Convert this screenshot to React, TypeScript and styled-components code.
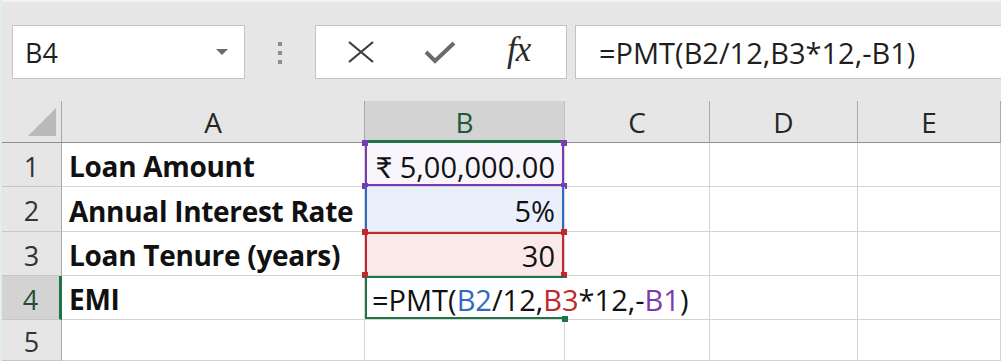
import { FC } from 'react';
import styled, { createGlobalStyle } from 'styled-components';

const GlobalStyle = createGlobalStyle`
    html, body {
        margin: 0;
        padding: 0;
        background: #ffffff;
        overflow: hidden;
    }
    body {
        font-family: "Open Sans", Lato, Arial, sans-serif;
    }
`;

const Frame = styled.div`
    width: 1001px;
    height: 361px;
    display: flex;
    flex-direction: column;
    overflow: hidden;
    border-left: 2px solid #e1efe6;
    box-sizing: border-box;
`;

const Toolbar = styled.div`
    height: 103px;
    background: #e6e6e6;
    border-top: 2px solid #f2f2f2;
    box-sizing: border-box;
    display: flex;
    align-items: flex-start;
    padding: 23px 0 0 10px;
`;

const Box = styled.div<{ $width?: number }>`
    height: 54px;
    box-sizing: border-box;
    background: #ffffff;
    border: 1px solid #c3c3c3;
    display: flex;
    align-items: center;
    width: ${p => (p.$width ? `${p.$width}px` : 'auto')};
    flex: ${p => (p.$width ? 'none' : '1')};
`;

const NameBox = styled(Box)`
    padding: 0 16px 0 12px;
    justify-content: space-between;
    font-size: 27px;
    color: #1f1f1f;
`;

const Caret = styled.span`
    width: 0;
    height: 0;
    border-left: 6px solid transparent;
    border-right: 6px solid transparent;
    border-top: 6px solid #6b6b6b;
`;

const Grip = styled.div`
    width: 70px;
    display: flex;
    flex-direction: column;
    align-items: center;
    gap: 5px;
    padding-top: 17px;
    & span {
        width: 4px;
        height: 4px;
        background: #8c8c8c;
    }
`;

const ButtonBox = styled(Box)`
    justify-content: space-around;
    padding: 0 8px 0 6px;
    margin-right: 8px;
`;

const IconSlot = styled.span`
    width: 48px;
    display: flex;
    justify-content: center;
    align-items: center;
`;

const Fx = styled.span`
    font-family: "Liberation Serif", "DejaVu Serif", serif;
    font-style: italic;
    font-size: 35px;
    color: #2b2b2b;
    letter-spacing: -1px;
    margin-top: -4px;
`;

const FormulaBox = styled(Box)`
    border-right: none;
    padding-left: 23px;
    font-size: 29px;
    color: #1f1f1f;
    white-space: nowrap;
`;

const Sheet = styled.div`
    flex: 1;
    display: grid;
    grid-template-columns: 60px 303px 200px 145px 148px 1fr;
    grid-template-rows: 42px 44px 45px 44px 44px 1fr;
    background: #ffffff;
`;

const Corner = styled.div`
    background: #e6e6e6;
    border-right: 1px solid #a8a8a8;
    border-bottom: 1px solid #8f8f8f;
    display: flex;
    align-items: flex-end;
    justify-content: flex-end;
    padding: 0 5px 6px 0;
    box-sizing: border-box;
`;

const ColHead = styled.div<{ $active?: boolean }>`
    background: ${p => (p.$active ? '#d3d3d3' : '#e6e6e6')};
    border-right: 1px solid ${p => (p.$active ? '#c4c4c4' : '#a9a9a9')};
    border-bottom: ${p => (p.$active ? '3px solid #217346' : '1px solid #8f8f8f')};
    box-sizing: border-box;
    display: flex;
    align-items: center;
    justify-content: center;
    padding-top: ${p => (p.$active ? '2px' : '0')};
    font-size: 28px;
    color: ${p => (p.$active ? '#1d5a37' : '#262626')};
`;

const RowHead = styled.div<{ $active?: boolean }>`
    background: ${p => (p.$active ? '#d3d3d3' : '#e6e6e6')};
    border-right: ${p => (p.$active ? '3px solid #217346' : '1px solid #a8a8a8')};
    border-bottom: 1px solid #c6c6c6;
    box-sizing: border-box;
    display: flex;
    align-items: center;
    justify-content: center;
    padding-top: 3px;
    font-size: 27px;
    color: ${p => (p.$active ? '#2a4a38' : '#333333')};
`;

const Cell = styled.div<{ $fill?: string; $edges?: string; $noRight?: boolean }>`
    background: ${p => p.$fill || '#ffffff'};
    border-right: ${p => (p.$noRight ? 'none' : '1px solid #d4d4d4')};
    border-bottom: 1px solid #d4d4d4;
    box-shadow: ${p => p.$edges || 'none'};
    box-sizing: border-box;
    display: flex;
    align-items: center;
    padding: 3px 7px 0;
    font-size: 29px;
    color: #111111;
    white-space: nowrap;
`;

const Label = styled(Cell)`
    font-weight: 700;
    font-size: 28px;
    letter-spacing: -0.3px;
`;

const Marked = styled(Cell)`
    position: relative;
    z-index: 1;
`;

const Value = styled(Marked)`
    justify-content: flex-end;
    padding-right: 9px;
`;

const Handle = styled.span<{ $color: string; $x: 'left' | 'right'; $y: 'top' | 'bottom' }>`
    position: absolute;
    width: 6px;
    height: 6px;
    background: ${p => p.$color};
    ${p => p.$x}: -3px;
    ${p => p.$y}: -3px;
    z-index: 2;
`;

const Ref = styled.span<{ $color: string }>`
    color: ${p => p.$color};
`;

const Cursor = styled.span`
    display: inline-block;
    width: 2px;
    height: 32px;
    background: #111111;
    margin-left: 3px;
    vertical-align: middle;
`;

const PURPLE = '#7a3bb0';
const BLUE = '#2f6bc1';
const RED = '#c1272d';
const GREEN = '#217346';

const edges = (color: string, sides: string[]) =>
    sides
        .map(s => {
            if (s === 'left') return `inset 2px 0 0 ${color}`;
            if (s === 'right') return `inset -2px 0 0 ${color}`;
            if (s === 'top') return `inset 0 2px 0 ${color}`;
            return `inset 0 -2px 0 ${color}`;
        })
        .join(', ');

const EmptyRow: FC = () => (
    <>
        <Cell />
        <Cell />
        <Cell />
    </>
);

const App: FC = () => {
    return (
        <Frame>
            <GlobalStyle />
            <Toolbar>
                <NameBox $width={233}>
                    B4
                    <Caret />
                </NameBox>
                <Grip>
                    <span />
                    <span />
                    <span />
                </Grip>
                <ButtonBox $width={252}>
                    <IconSlot>
                        <svg width="30" height="24" viewBox="0 0 30 24">
                            <path d="M3 2 L27 22 M27 2 L3 22" stroke="#3c3c3c" strokeWidth="2.2" fill="none" />
                        </svg>
                    </IconSlot>
                    <IconSlot>
                        <svg width="32" height="26" viewBox="0 0 32 26">
                            <path d="M2 13 L11 22 L30 4" stroke="#6a6a6a" strokeWidth="4" fill="none" strokeLinejoin="miter" />
                        </svg>
                    </IconSlot>
                    <IconSlot>
                        <Fx>fx</Fx>
                    </IconSlot>
                </ButtonBox>
                <FormulaBox>=PMT(B2/12,B3*12,-B1)</FormulaBox>
            </Toolbar>

            <Sheet>
                <Corner>
                    <svg width="28" height="28" viewBox="0 0 28 28">
                        <path d="M28 0 L28 28 L0 28 Z" fill="#b9b9b9" />
                    </svg>
                </Corner>
                <ColHead>A</ColHead>
                <ColHead $active>B</ColHead>
                <ColHead>C</ColHead>
                <ColHead>D</ColHead>
                <ColHead>E</ColHead>

                <RowHead>1</RowHead>
                <Label>Loan Amount</Label>
                <Value $fill="#f8f5fc" $edges={edges(PURPLE, ['left', 'right', 'bottom'])}>
                    ₹ 5,00,000.00
                    <Handle $color={PURPLE} $x="left" $y="top" />
                    <Handle $color={PURPLE} $x="right" $y="top" />
                    <Handle $color={PURPLE} $x="left" $y="bottom" />
                    <Handle $color={PURPLE} $x="right" $y="bottom" />
                </Value>
                <EmptyRow />

                <RowHead>2</RowHead>
                <Label>Annual Interest Rate</Label>
                <Value $fill="#e9f0fb" $edges={edges(BLUE, ['left', 'right'])}>
                    5%
                </Value>
                <EmptyRow />

                <RowHead>3</RowHead>
                <Label>Loan Tenure (years)</Label>
                <Value $fill="#fbe9ea" $edges={edges(RED, ['left', 'right', 'top'])}>
                    30
                    <Handle $color={RED} $x="left" $y="top" />
                    <Handle $color={RED} $x="right" $y="top" />
                    <Handle $color={RED} $x="left" $y="bottom" />
                    <Handle $color={RED} $x="right" $y="bottom" />
                </Value>
                <EmptyRow />

                <RowHead $active>4</RowHead>
                <Label>EMI</Label>
                <Marked $noRight $edges={edges(GREEN, ['left', 'top', 'bottom'])}>
                    =PMT(<Ref $color={BLUE}>B2</Ref>/12,<Ref $color={RED}>B3</Ref>*12,-<Ref $color={PURPLE}>B1</Ref>)
                    <Cursor />
                    <Handle $color={GREEN} $x="right" $y="bottom" />
                </Marked>
                <Cell />
                <Cell />
                <Cell />

                <RowHead>5</RowHead>
                <Cell />
                <Cell />
                <EmptyRow />
            </Sheet>
        </Frame>
    );
};

export default App;
